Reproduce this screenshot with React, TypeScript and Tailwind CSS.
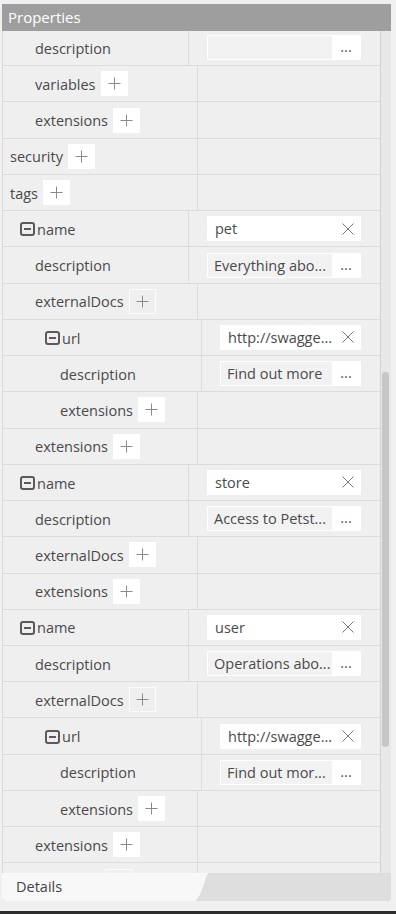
import React from "react";

type Kind = "plus" | "plusOutline" | "desc" | "text";
type Row = { label: string; depth: 0 | 1 | 2; kind: Kind; value?: string; collapse?: boolean; hidden?: boolean };

const rows: Row[] = [
  { label: "description", depth: 1, kind: "desc", value: "" },
  { label: "variables", depth: 1, kind: "plus" },
  { label: "extensions", depth: 1, kind: "plus" },
  { label: "security", depth: 0, kind: "plus" },
  { label: "tags", depth: 0, kind: "plus" },
  { label: "name", depth: 1, kind: "text", value: "pet", collapse: true },
  { label: "description", depth: 1, kind: "desc", value: "Everything abo..." },
  { label: "externalDocs", depth: 1, kind: "plusOutline" },
  { label: "url", depth: 2, kind: "text", value: "http://swagge...", collapse: true },
  { label: "description", depth: 2, kind: "desc", value: "Find out more" },
  { label: "extensions", depth: 2, kind: "plus" },
  { label: "extensions", depth: 1, kind: "plus" },
  { label: "name", depth: 1, kind: "text", value: "store", collapse: true },
  { label: "description", depth: 1, kind: "desc", value: "Access to Petst..." },
  { label: "externalDocs", depth: 1, kind: "plus" },
  { label: "extensions", depth: 1, kind: "plus" },
  { label: "name", depth: 1, kind: "text", value: "user", collapse: true },
  { label: "description", depth: 1, kind: "desc", value: "Operations abo..." },
  { label: "externalDocs", depth: 1, kind: "plusOutline" },
  { label: "url", depth: 2, kind: "text", value: "http://swagge...", collapse: true },
  { label: "description", depth: 2, kind: "desc", value: "Find out mor..." },
  { label: "extensions", depth: 2, kind: "plus" },
  { label: "extensions", depth: 1, kind: "plus" },
  { label: "", depth: 0, kind: "plusOutline", hidden: true },
];

function PlusGlyph() {
  return (
    <svg width="13" height="13" viewBox="0 0 13 13">
      <path d="M6.5 0.5V12.5M0.5 6.5H12.5" stroke="#8a8a8a" strokeWidth="1" fill="none" />
    </svg>
  );
}

function XGlyph() {
  return (
    <svg width="12" height="12" viewBox="0 0 12 12">
      <path d="M0.5 0.5L11.5 11.5M11.5 0.5L0.5 11.5" stroke="#7a7a7a" strokeWidth="1" fill="none" />
    </svg>
  );
}

function CollapseIcon() {
  return (
    <svg width="15" height="14" viewBox="0 0 15 14">
      <rect x="1" y="1" width="13" height="12" rx="2" ry="2" fill="none" stroke="#5a5a5a" strokeWidth="2" />
      <path d="M4 7H11" stroke="#5a5a5a" strokeWidth="2" />
    </svg>
  );
}

function PropRow({ r }: { r: Row }) {
  const hasInput = r.kind === "desc" || r.kind === "text";
  const leftW = hasInput ? (r.depth === 2 ? "w-[199px]" : "w-[186px]") : "w-[195px]";
  let pad = "pl-[7px]";
  if (r.collapse) pad = r.depth === 2 ? "pl-[42px]" : "pl-[17px]";
  else if (r.depth === 1) pad = "pl-[32px]";
  else if (r.depth === 2) pad = "pl-[57px]";

  return (
    <div className="flex h-[36.24px] shrink-0 border-b border-[#dcdcdc]">
      <div className={`${leftW} ${pad} flex items-center border-r border-[#dcdcdc] shrink-0`}>
        {r.collapse && (
          <span className="mr-[2px] flex items-center pt-px">
            <CollapseIcon />
          </span>
        )}
        {r.hidden ? (
          <span className="w-[90px] shrink-0" />
        ) : (
          <span className="whitespace-nowrap pt-[2px]">{r.label}</span>
        )}
        {r.kind === "plus" && (
          <span className="ml-[5px] flex h-[25px] w-[27px] shrink-0 items-center justify-center bg-white">
            <PlusGlyph />
          </span>
        )}
        {r.kind === "plusOutline" && (
          <span className="ml-[5px] flex h-[25px] w-[27px] shrink-0 items-center justify-center border border-[#fbfbfb]">
            <PlusGlyph />
          </span>
        )}
      </div>
      <div className="flex flex-1 items-center pl-[18px] pr-[19px] min-w-0">
        {r.kind === "desc" && (
          <div className="flex h-[25px] flex-1 bg-white p-px min-w-0">
            <div className="flex flex-1 items-center bg-[#f2f2f2] pl-[6px] pt-px whitespace-nowrap overflow-hidden">
              {r.value}
            </div>
            <div className="flex w-[28px] items-center justify-center text-[#555] pb-[1px]">...</div>
          </div>
        )}
        {r.kind === "text" && (
          <div className="flex h-[25px] flex-1 items-center bg-white pl-[8px] pr-[7px] min-w-0">
            <span className="flex-1 whitespace-nowrap overflow-hidden pt-px">{r.value}</span>
            <XGlyph />
          </div>
        )}
      </div>
    </div>
  );
}

export default function App() {
  return (
    <div
      className="relative flex h-[914px] w-[396px] flex-col overflow-hidden bg-[#f0f0f0] text-[14.5px] text-[#4a4a4a]"
      style={{ fontFamily: "'Segoe UI', 'Open Sans', 'Noto Sans', sans-serif" }}
    >
      <div className="ml-[2px] mt-[4px] flex w-[389px] flex-col">
        <div className="flex h-[27px] items-center bg-[#9e9e9e] pl-[6px] text-[15px] text-white">Properties</div>
        <div className="flex h-[842px]">
          <div className="flex w-[378px] flex-col overflow-hidden border-l border-[#d8d8d8] bg-[#efefef]">
            <div className="-mt-px flex flex-col">
              {rows.map((r, i) => (
                <PropRow key={i} r={r} />
              ))}
            </div>
          </div>
          <div className="flex w-[11px] flex-col border-l border-[#d2d2d2] bg-[#e8e8e8] pl-px">
            <div className="mt-[341px] h-[375px] w-[7px] rounded-full bg-[#c6c6c6]" />
          </div>
        </div>
        <div className="flex h-[28px] overflow-hidden rounded-b-[4px] bg-[#dedede]">
          <div className="relative flex h-[28px] w-[208px] items-center pl-[14px] text-[14.5px] text-[#444]">
            <svg className="absolute left-0 top-0" width="208" height="28" viewBox="0 0 208 28">
              <path d="M0 0H206C202 6 201 22 193 28H4Q0 28 0 24Z" fill="#f8f8f8" />
            </svg>
            <span className="relative">Details</span>
          </div>
        </div>
      </div>
      <div className="flex-1" />
      <div className="h-[3px] bg-[#2e2e2e]" />
    </div>
  );
}
